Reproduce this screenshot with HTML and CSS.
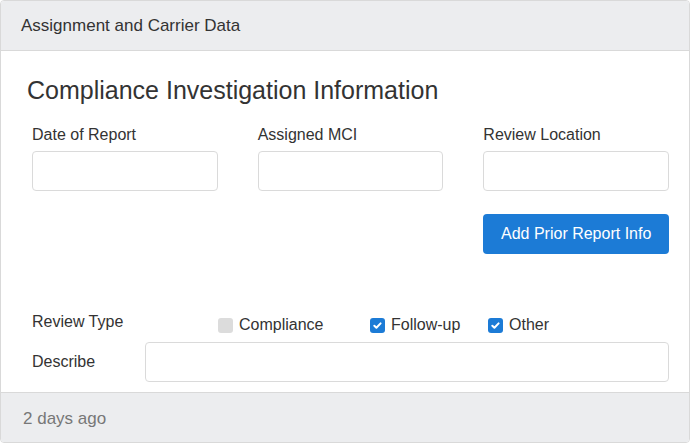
FILE: index.html
```html
<!DOCTYPE html>
<html lang="en">
<head>
<meta charset="utf-8">
<title>Assignment and Carrier Data</title>
<link rel="stylesheet" href="styles.css">
</head>
<body>
<div class="card">
  <div class="card-header">Assignment and Carrier Data</div>
  <div class="card-body">
    <h2 class="title">Compliance Investigation Information</h2>
    <div class="form">
      <div class="grid3">
        <div class="field">
          <label class="label">Date of Report</label>
          <input class="input" type="text">
        </div>
        <div class="field">
          <label class="label">Assigned MCI</label>
          <input class="input" type="text">
        </div>
        <div class="field">
          <label class="label">Review Location</label>
          <input class="input" type="text">
        </div>
        <div></div>
        <div></div>
        <button class="btn" type="button">Add Prior Report Info</button>
      </div>
      <div class="review-row">
        <span class="label review-label">Review Type</span>
        <div class="checks">
          <span class="check"><span class="box box-off"></span><span class="check-text">Compliance</span></span>
          <span class="check"><span class="box box-on"><svg viewBox="0 0 15 15" width="15" height="15"><path d="M4.3 7.8 L6.4 9.8 L10.6 5.4" fill="none" stroke="#fff" stroke-width="2" stroke-linecap="round" stroke-linejoin="round"/></svg></span><span class="check-text">Follow-up</span></span>
          <span class="check"><span class="box box-on"><svg viewBox="0 0 15 15" width="15" height="15"><path d="M4.3 7.8 L6.4 9.8 L10.6 5.4" fill="none" stroke="#fff" stroke-width="2" stroke-linecap="round" stroke-linejoin="round"/></svg></span><span class="check-text">Other</span></span>
        </div>
      </div>
      <div class="describe-row">
        <span class="label describe-label">Describe</span>
        <input class="input describe-input" type="text">
      </div>
    </div>
  </div>
  <div class="card-footer">2 days ago</div>
</div>
</body>
</html>
```

FILE: styles.css
```css
html, body {
  margin: 0;
  padding: 0;
  background: #ffffff;
}
body {
  font-family: "Liberation Sans", Arial, sans-serif;
  font-size: 16px;
  color: #333333;
}
.card {
  box-sizing: border-box;
  width: 690px;
  height: 443px;
  border: 1px solid #d9d9d9;
  border-radius: 4px;
  overflow: hidden;
  display: flex;
  flex-direction: column;
  background: #ffffff;
}
.card-header {
  background: #ecedef;
  border-bottom: 1px solid #d9d9d9;
  padding: 15px 20px 14px;
  font-size: 17px;
  line-height: 20px;
  color: #333333;
}
.card-body {
  flex: 1;
  padding: 26px 20px 10px 26px;
}
.title {
  margin: 0;
  font-size: 25px;
  font-weight: normal;
  line-height: 26px;
  color: #333333;
}
.form {
  margin-left: 5px;
  margin-top: 22px;
}
.grid3 {
  display: grid;
  grid-template-columns: minmax(0, 1fr) minmax(0, 1fr) minmax(0, 1fr);
  column-gap: 40px;
  row-gap: 23px;
}
.field {
  display: flex;
  flex-direction: column;
  min-width: 0;
}
.label {
  line-height: 20px;
  color: #333333;
}
.field .label {
  margin-bottom: 6px;
}
.input {
  box-sizing: border-box;
  width: 100%;
  min-width: 0;
  height: 40px;
  border: 1px solid #dadada;
  border-radius: 4px;
  background: #ffffff;
  font: inherit;
  padding: 0 10px;
  margin: 0;
}
.btn {
  box-sizing: border-box;
  height: 40px;
  border: 0;
  border-radius: 4px;
  background: #1c7bd6;
  color: #ffffff;
  font: inherit;
  padding: 0;
  margin: 0;
}
.review-row {
  display: flex;
  align-items: flex-start;
  margin-top: 58px;
}
.review-label {
  width: 186px;
}
.checks {
  display: grid;
  grid-template-columns: 152px 118px auto;
  margin-top: 3px;
}
.check {
  display: flex;
  align-items: center;
  line-height: 20px;
}
.box {
  width: 15px;
  height: 15px;
  border-radius: 3px;
  margin-right: 6px;
  display: flex;
}
.box-off {
  background: #dcdcdc;
}
.box-on {
  background: #1c7bd6;
}
.check-text {
  color: #333333;
}
.describe-row {
  display: flex;
  align-items: center;
  margin-top: 7px;
}
.describe-label {
  width: 113px;
}
.describe-input {
  flex: 1;
  width: auto;
}
.card-footer {
  background: #ecedef;
  border-top: 1px solid #d9d9d9;
  padding: 16px 22px 13px;
  font-size: 17px;
  line-height: 20px;
  color: #777777;
}
```
